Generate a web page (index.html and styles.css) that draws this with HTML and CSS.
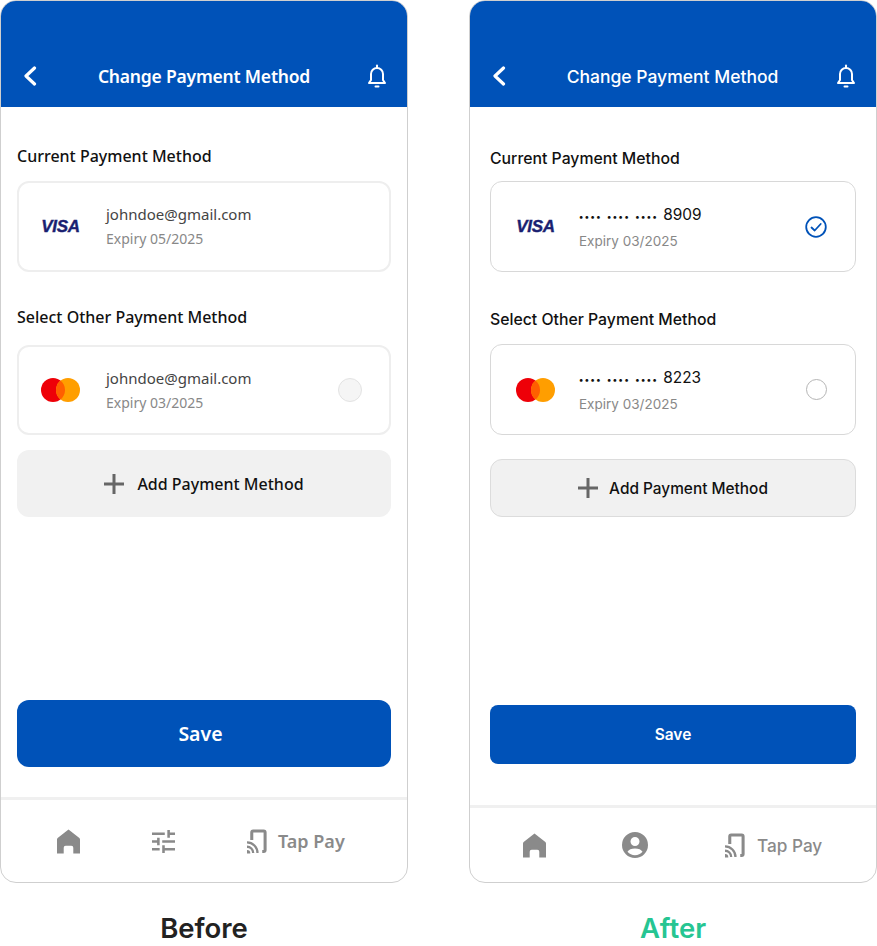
FILE: index.html
```html
<!DOCTYPE html>
<html lang="en">
<head>
<meta charset="UTF-8">
<title>Change Payment Method</title>
<link rel="stylesheet" href="styles.css">
</head>
<body>

<div class="page">

  <!-- Before -->
  <section class="column before">
    <div class="phone">
      <header class="topbar">
        <svg class="back" viewBox="0 0 14 20"><path d="M11.5 2 3 10l8.5 8"/></svg>
        <h1>Change Payment Method</h1>
        <svg class="bell" viewBox="0 0 20 24"><path d="M2 19h16l-2-3v-6a6 6 0 0 0-12 0v6z"/><path class="bell-top" d="M10 1.500v2"/><path class="bell-top" d="M8.500 22.500h3"/></svg>
      </header>
      <main class="content">
        <h2 class="first">Current Payment Method</h2>
        <div class="card">
          <div class="logo"><span class="visa">VISA</span></div>
          <div class="info">
            <div class="name">johndoe@gmail.com</div>
            <div class="expiry">Expiry 05/2025</div>
          </div>
        </div>
        <h2 class="second">Select Other Payment Method</h2>
        <div class="card other">
          <div class="logo">
            <svg class="mastercard" viewBox="0 0 39 24"><circle cx="12" cy="12" r="12" fill="#ee0008"/><circle cx="27" cy="12" r="12" fill="#ff9e00"/><path d="M19.500 2.600a12 12 0 0 1 0 18.800 12 12 0 0 1 0-18.800z" fill="#ff5f00"/></svg>
          </div>
          <div class="info">
            <div class="name">johndoe@gmail.com</div>
            <div class="expiry">Expiry 03/2025</div>
          </div>
          <span class="radio"></span>
        </div>
        <button class="add"><svg class="plus" viewBox="0 0 20 20"><path d="M10 0v20M0 10h20"/></svg>Add Payment Method</button>
        <button class="save">Save</button>
      </main>
      <nav class="tabs">
        <svg class="home" viewBox="0 0 24 25"><path d="M12 0 23 8.500q1 .8 1 2V25h-7v-6q0-2-2-2H9q-2 0-2 2v6H0V10.500q0-1.200 1-2z"/></svg>
        <svg class="tune" viewBox="3 3 18 18"><path d="M3 17v2h6v-2H3zM3 5v2h10V5H3zm10 16v-2h8v-2h-8v-2h-2v6h2zM7 9v2H3v2h4v2h2V9H7zm14 4v-2H11v2h10zm-6-4h2V7h4V5h-4V3h-2v6z"/></svg>
        <div class="tap">
          <svg class="tap-icon" viewBox="0 0 21 25"><path class="tap-line" d="M5 11V3q0-1.500 1.500-1.500h11q1.500 0 1.500 1.500v18.500q0 1.500-1.500 1.500H16"/><path class="tap-line thin" d="M0 13.500A11 11 0 0 1 11 24.500"/><path class="tap-line thin" d="M0 18a6.500 6.500 0 0 1 6.500 6.500"/><path d="M0 21.500a3.500 3.500 0 0 1 3.500 3.500H0z" fill="#8a8a8a"/></svg>
          <span>Tap Pay</span>
        </div>
      </nav>
    </div>
    <p class="caption">Before</p>
  </section>

  <!-- After -->
  <section class="column after">
    <div class="phone">
      <header class="topbar">
        <svg class="back" viewBox="0 0 14 20"><path d="M11.5 2 3 10l8.5 8"/></svg>
        <h1>Change Payment Method</h1>
        <svg class="bell" viewBox="0 0 20 24"><path d="M2 19h16l-2-3v-6a6 6 0 0 0-12 0v6z"/><path class="bell-top" d="M10 1.500v2"/><path class="bell-top" d="M8.500 22.500h3"/></svg>
      </header>
      <main class="content">
        <h2 class="first">Current Payment Method</h2>
        <div class="card">
          <div class="logo"><span class="visa">VISA</span></div>
          <div class="info">
            <div class="name"><span class="dots">••••</span><span class="dots">••••</span><span class="dots">••••</span>8909</div>
            <div class="expiry">Expiry 03/2025</div>
          </div>
          <svg class="check" viewBox="0 0 22 22"><circle cx="11" cy="11" r="9.800"/><path d="M6.500 11.500l3.200 3 6-6.500"/></svg>
        </div>
        <h2 class="second">Select Other Payment Method</h2>
        <div class="card">
          <div class="logo">
            <svg class="mastercard" viewBox="0 0 39 24"><circle cx="12" cy="12" r="12" fill="#ee0008"/><circle cx="27" cy="12" r="12" fill="#ff9e00"/><path d="M19.500 2.600a12 12 0 0 1 0 18.800 12 12 0 0 1 0-18.800z" fill="#ff5f00"/></svg>
          </div>
          <div class="info">
            <div class="name"><span class="dots">••••</span><span class="dots">••••</span><span class="dots">••••</span>8223</div>
            <div class="expiry">Expiry 03/2025</div>
          </div>
          <span class="radio"></span>
        </div>
        <button class="add"><svg class="plus" viewBox="0 0 20 20"><path d="M10 0v20M0 10h20"/></svg>Add Payment Method</button>
        <button class="save">Save</button>
      </main>
      <nav class="tabs">
        <svg class="home" viewBox="0 0 24 25"><path d="M12 0 23 8.500q1 .8 1 2V25h-7v-6q0-2-2-2H9q-2 0-2 2v6H0V10.500q0-1.200 1-2z"/></svg>
        <svg class="person" viewBox="0 0 26 26"><path fill-rule="evenodd" d="M13 0a13 13 0 1 1 0 26 13 13 0 0 1 0-26zm0 5a4.500 4.500 0 1 0 0 9 4.500 4.500 0 0 0 0-9zm0 11.500c-3.500 0-6.500 1.200-7.500 3.300a10 10 0 0 0 15 0c-1-2.100-4-3.300-7.500-3.300z"/></svg>
        <div class="tap">
          <svg class="tap-icon" viewBox="0 0 21 25"><path class="tap-line" d="M5 11V3q0-1.500 1.500-1.500h11q1.500 0 1.500 1.500v18.500q0 1.500-1.500 1.500H16"/><path class="tap-line thin" d="M0 13.500A11 11 0 0 1 11 24.500"/><path class="tap-line thin" d="M0 18a6.500 6.500 0 0 1 6.500 6.500"/><path d="M0 21.500a3.500 3.500 0 0 1 3.500 3.500H0z" fill="#8a8a8a"/></svg>
          <span>Tap Pay</span>
        </div>
      </nav>
    </div>
    <p class="caption">After</p>
  </section>

</div>

</body>
</html>
```

FILE: styles.css
```css
* {
  box-sizing: border-box;
}
body {
  margin: 0;
  background: #fff;
  font-family: Inter, sans-serif;
}
.page {
  display: flex;
  justify-content: space-between;
  width: 877px;
}
.column {
  width: 408px;
}
.phone {
  display: flex;
  flex-direction: column;
  height: 883px;
  border: 1px solid #cfcfcf;
  border-radius: 16px;
  overflow: hidden;
}

/* header */
.topbar {
  display: flex;
  align-items: center;
  justify-content: space-between;
  flex: none;
  height: 106px;
  padding: 44px 20px 0 22px;
  background: #0052b8;
  color: #fff;
}
.topbar h1 {
  margin: 0 0 0 3px;
  font-size: 17.500px;
  font-weight: 500;
}
.back {
  width: 14px;
  height: 20px;
  fill: none;
  stroke: #fff;
  stroke-width: 3.200;
  stroke-linecap: round;
  stroke-linejoin: round;
}
.bell {
  width: 20px;
  height: 24px;
  fill: none;
  stroke: #fff;
  stroke-width: 2;
  stroke-linejoin: round;
}
.bell-top {
  stroke-linecap: round;
}

/* content */
.content {
  display: flex;
  flex-direction: column;
  flex: 1;
}
h2 {
  margin: 0;
  font-size: 15.800px;
  font-weight: 500;
  line-height: 20px;
  color: #111;
}
.card {
  display: flex;
  align-items: center;
  flex: none;
  height: 91px;
  border: 1px solid #dcdcdc;
  border-radius: 12px;
}
.logo {
  display: flex;
  justify-content: center;
  flex: none;
}
.visa {
  font-family: "Liberation Sans", sans-serif;
  font-size: 17px;
  font-weight: 700;
  font-style: italic;
  letter-spacing: -0.300px;
  color: #1a1f71;
  -webkit-text-stroke: 0.400px #1a1f71;
}
.mastercard {
  display: block;
  width: 39px;
  height: 24px;
}
.info {
  display: flex;
  flex-direction: column;
  flex: 1;
}
.name {
  font-size: 15px;
  line-height: 20px;
  color: #444;
}
.expiry {
  font-size: 14px;
  line-height: 20px;
  color: #888;
}
.radio {
  flex: none;
  border-radius: 50%;
}
.add {
  display: flex;
  align-items: center;
  justify-content: center;
  flex: none;
  border: none;
  border-radius: 12px;
  background: #f1f1f1;
  color: #111;
  font-family: inherit;
  font-size: 16px;
  font-weight: 500;
}
.plus {
  flex: none;
  width: 20px;
  height: 20px;
  fill: none;
  stroke: #666;
  stroke-width: 3;
}
.save {
  flex: none;
  margin-top: auto;
  border: none;
  background: #0052b8;
  color: #fff;
  font-family: inherit;
}

/* bottom tabs */
.tabs {
  display: flex;
  align-items: center;
  flex: none;
  border-top: 3px solid #f0f0f0;
  fill: #8a8a8a;
  color: #8a8a8a;
}
.home {
  width: 23px;
  height: 25px;
}
.tune {
  width: 23px;
  height: 23px;
}
.person {
  width: 26px;
  height: 26px;
  margin-right: 1px;
}
.tap {
  display: flex;
  align-items: center;
}
.tap-icon {
  width: 20px;
  height: 25px;
}
.tap-line {
  fill: none;
  stroke: #8a8a8a;
  stroke-width: 3.200;
}
.tap-line.thin {
  stroke-width: 2.400;
}
.caption {
  margin: 25px 0 0;
  font-size: 27.500px;
  font-weight: 600;
  line-height: 40px;
  text-align: center;
  color: #222;
}
.after .caption {
  color: #26c592;
}

/* left phone uses the old type */
.before h1,
.before h2,
.before .name,
.before .expiry,
.before .add,
.before .save,
.before .tap span {
  font-family: "Noto Sans", sans-serif;
}
.before .topbar h1 {
  margin-left: 4px;
  font-size: 17.500px;
  font-weight: 600;
  letter-spacing: -0.200px;
}
.before .content {
  padding: 39px 16px 30px;
}
.before h2 {
  font-size: 16px;
}
.before h2.first {
  margin-bottom: 15px;
}
.before h2.second {
  margin: 35px 0 18px;
}
.before .card {
  border: 2px solid #eeeeee;
}
.before .card.other {
  height: 90px;
}
.before .logo {
  width: 83px;
  margin-right: 4px;
}
.before .info {
  gap: 5px;
}
.before .radio {
  width: 24px;
  height: 24px;
  margin-right: 27px;
  border: 1.500px solid #e3e3e3;
  background: #f5f5f5;
}
.before .add {
  height: 67px;
  margin-top: 15px;
  gap: 13px;
}
.before .save {
  height: 67px;
  padding-right: 13px;
  border-radius: 12px;
  font-size: 19.500px;
  font-weight: 600;
}
.before .tabs {
  height: 85px;
  padding: 0 62px 0 56px;
}
.before .home {
  margin-right: 72px;
}
.before .tune {
  margin-right: 72px;
}
.before .tap {
  gap: 11px;
  font-size: 18px;
  font-weight: 600;
}

/* right phone */
.after .content {
  padding: 42px 20px 41px;
}
.after h2.first {
  margin-bottom: 12px;
}
.after h2.second {
  margin: 38px 0 14px;
}
.after .card {
  border-color: #d8d8d8;
}
.after .logo {
  width: 89px;
}
.after .info {
  gap: 4px;
  margin-left: -1px;
  padding-top: 2px;
}
.after .name {
  font-size: 15.400px;
  color: #111;
}
.after .expiry {
  font-size: 13.500px;
}
.dots {
  margin-right: 5px;
  font-size: 9px;
  font-weight: 700;
  letter-spacing: 1.500px;
}
.check {
  flex: none;
  width: 22px;
  height: 22px;
  margin-right: 28px;
  fill: none;
  stroke: #0052b8;
  stroke-width: 1.800;
  stroke-linecap: round;
  stroke-linejoin: round;
}
.after .radio {
  width: 21px;
  height: 21px;
  margin-right: 28px;
  border: 1.200px solid #b5b5b5;
}
.after .add {
  height: 58px;
  margin-top: 24px;
  border: 1px solid #dcdcdc;
  gap: 11px;
  font-size: 15.400px;
}
.after .save {
  height: 59px;
  border-radius: 8px;
  font-size: 15.500px;
  font-weight: 600;
}
.after .tabs {
  height: 77px;
  padding: 0 52px 0 53px;
  gap: 76px;
}
.after .tap {
  gap: 12px;
  font-size: 17.200px;
  font-weight: 500;
}
```
